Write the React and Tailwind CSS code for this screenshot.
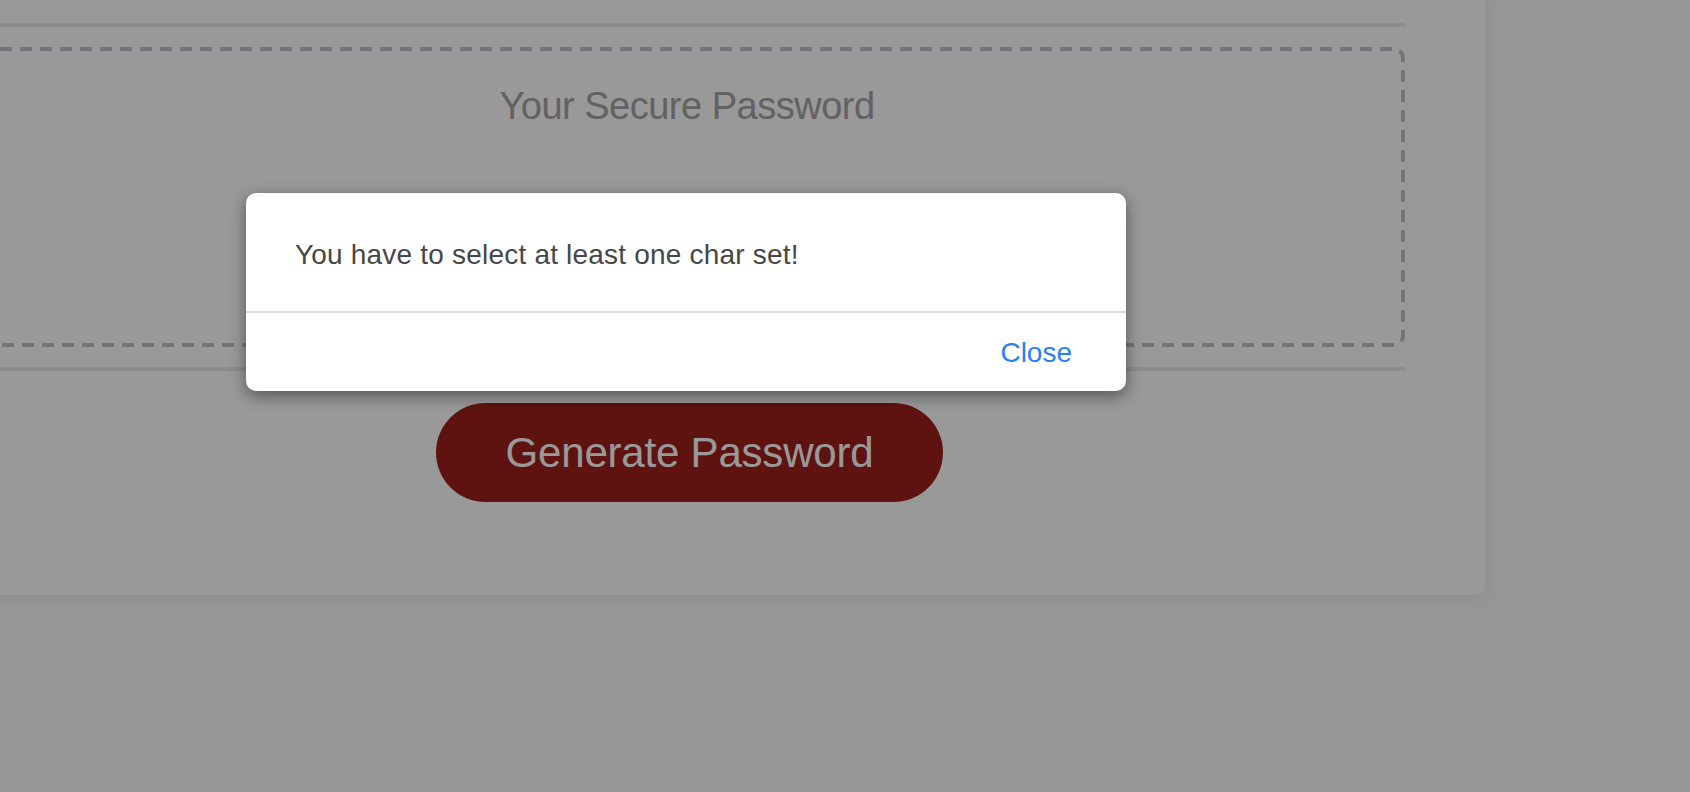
import React from 'react';

// Safari-style long dashes for the password box outline
function DashedOutline() {
    return (
        <svg className="pointer-events-none absolute inset-0" width="1436" height="300" viewBox="0 0 1436 300" fill="none">
            <rect x="2" y="2" width="1432" height="296" rx="9" stroke="#c2c4cb" strokeWidth="4" strokeDasharray="12 8" />
        </svg>
    );
}

export default function App() {
    return (
        <div className="relative h-[792px] w-full overflow-hidden bg-[#f9fafd] font-['Liberation_Sans',Arial,sans-serif]">
            {/* Generator card (page is scrolled, so it runs off the top-left) */}
            <div className="-ml-[111px] w-[1596px] rounded-b-[10px] bg-white px-[80px] pt-[23px] pb-[93px] shadow-[0_2px_18px_rgba(0,0,0,0.08)]">
                <div className="h-[4px] bg-[#e8e8e8]" />

                <div className="relative mt-[20px] h-[300px] pt-[36px]">
                    <DashedOutline />
                    <p className="text-center text-[38px] leading-[46px] tracking-[-0.5px] text-[#a3a3a3]">
                        Your Secure Password
                    </p>
                </div>

                <div className="mt-[20px] h-[4px] bg-[#e8e8e8]" />

                <div className="mt-[32px] flex justify-center pl-[5px]">
                    <button className="flex h-[99px] w-[507px] items-center justify-center rounded-full bg-[#9d201b] text-[42px] tracking-[-0.2px] text-white">
                        Generate Password
                    </button>
                </div>
            </div>

            {/* Modal backdrop + alert */}
            <div className="absolute inset-0 bg-black/40">
                <div className="ml-[246px] mt-[193px] w-[880px] rounded-[10px] bg-white shadow-[0_5px_16px_rgba(0,0,0,0.45)]">
                    <div className="px-[49px] pt-[41px] pb-[35px]">
                        <p className="text-[28px] leading-[42px] tracking-[0.2px] text-[#474747]">You have to select at least one char set!</p>
                    </div>
                    <div className="flex justify-end border-t-2 border-[#dcdcdc] pr-[54px] pt-[19px] pb-[17px]">
                        <button className="text-[28px] leading-[42px] text-[#2b7ef4]">Close</button>
                    </div>
                </div>
            </div>
        </div>
    );
}
